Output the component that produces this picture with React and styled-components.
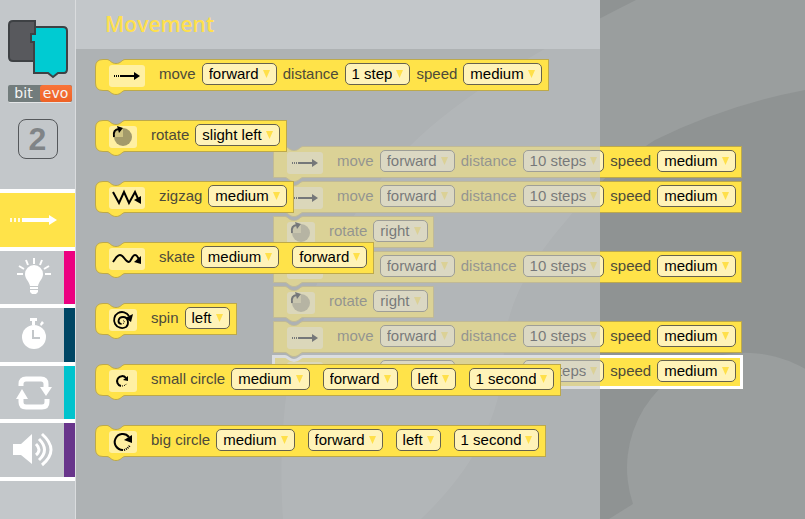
import React from "react";
import styled, { createGlobalStyle, css } from "styled-components";

const yellow = "#ffe349";
const edge = "#bda94a";
const steel = "#c3c7ca";

const GlobalStyle = createGlobalStyle`
  * { box-sizing: border-box; }
  body { margin: 0; font-family: "Liberation Sans", Arial, sans-serif; font-size: 15px; }
`;

const Page = styled.div`
  display: flex;
  min-height: 100vh;
  background: #8f9393;
`;

const Sidebar = styled.aside`
  width: 76px;
  flex: none;
  background: ${steel};
  border-right: 1px solid #dadcde;
`;

const Brand = styled.div`
  display: flex;
  flex-direction: column;
  align-items: center;
  height: 189px;
  padding-top: 18px;
`;

const Robots = styled.div`
  display: flex;
  width: 64px;
  margin: 6px 0 0 4px;
  border-radius: 2px;
  background: #727c7c;
  border-bottom: 1px solid #e4e6e7;
`;

const RobotButton = styled.button`
  flex: 1;
  height: 17px;
  padding: 0;
  border: 0;
  border-radius: 3px;
  font: 14px/15px "DejaVu Sans", sans-serif;
  color: #f4f4f4;
  background: ${(p) => (p.$active ? "linear-gradient(#f8743a, #ee6226)" : "transparent")};
`;

const LevelButton = styled.button`
  width: 40px;
  height: 40px;
  margin-top: 16px;
  padding: 0;
  border: 1px solid #55585b;
  border-radius: 8px;
  background: transparent;
  color: #808487;
  font: bold 32px/38px "Liberation Sans", Arial, sans-serif;
`;

const Categories = styled.nav`
  display: flex;
  flex-direction: column;
  gap: 4px;
  height: 292px;
  padding: 4px 0;
  background: #fff;
`;

const Category = styled.button`
  flex: 1;
  display: flex;
  align-items: center;
  padding: 0;
  border: 0;
  border-right: 11px solid ${(p) => p.$color};
  background: ${(p) => (p.$active ? yellow : steel)};

  svg { display: block; }
`;

const Stage = styled.div`
  position: relative;
  flex: 1;
  min-width: 0;
  display: grid;
  overflow: hidden;
`;

const Backdrop = styled.svg`
  position: absolute;
  top: 0;
  left: 0;
`;

const Workspace = styled.main`
  grid-area: 1 / 1;
  position: relative;
  display: flex;
  flex-direction: column;
  align-items: flex-start;
  gap: 3px;
  padding: 146px 0 0 197px;
`;

const Flyout = styled.section`
  grid-area: 1 / 1;
  position: relative;
  width: 72%;
  max-width: 524px;
  background: rgba(195, 199, 202, 0.6);
`;

const FlyoutHeader = styled.header`
  height: 49px;
  padding-left: 29px;
  background: ${steel};
`;

const Title = styled.h1`
  margin: 0;
  font: 600 21px/48px "Open Sans", "Noto Sans", sans-serif;
  color: #ffe04d;
`;

const BlockList = styled.div`
  display: flex;
  flex-direction: column;
  align-items: flex-start;
  gap: 29px;
  padding: 10px 0 0 19px;
`;

const BlockBox = styled.div`
  position: relative;
  display: flex;
  gap: 6px;
  height: 32px;
  padding: 4px ${(p) => (p.$square ? 6 : 7)}px 4px 14px;
  white-space: nowrap;
`;

const Shape = styled.div`
  position: absolute;
  inset: 0;
  display: flex;

  svg { flex: none; overflow: visible; }
`;

const ShapeBody = styled.div`
  flex: 1;
  background: ${yellow};
  border: 1px solid ${edge};
  border-left: 0;
  ${(p) => p.$selected && css`
    border: 3px solid #fff;
    border-left: 0;
    margin: -1px -1px -1px 0;
  `}
`;

const IconPad = styled.span`
  position: relative;
  align-self: flex-end;
  flex: none;
  width: ${(p) => (p.$wide ? 36 : 28)}px;
  height: 22px;
  margin-right: 8px;
  border-radius: 3px;
  background: #fff0a3;

  svg { display: block; }
`;

const Label = styled.span`
  position: relative;
  line-height: 21px;
  color: #4d4a3a;
`;

const Field = styled.label`
  position: relative;
  display: grid;
  align-self: flex-start;

  & + & { margin-left: 7px; }

  svg {
    grid-area: 1 / 1;
    place-self: center end;
    margin-right: 7px;
    pointer-events: none;
  }
`;

const Select = styled.select`
  grid-area: 1 / 1;
  appearance: none;
  field-sizing: content;
  height: 22px;
  padding: 0 17px 1px 6px;
  border: 1px solid #66624d;
  border-radius: 5px;
  background: #fff3b8;
  color: #000;
  font: 15px/19px "Liberation Sans", Arial, sans-serif;
`;

const ink = { fill: "none", stroke: "#000", strokeWidth: 2 };

const icons = {
  move: {
    wide: true,
    art: (
      <>
        <path d="M5 11h1M7 11h1M9 11h1" {...ink} />
        <path d="M11 11h15" {...ink} />
        <path d="M25 7l6 4-6 4z" />
      </>
    ),
  },
  rotate: {
    art: (
      <>
        <circle cx="14" cy="11" r="9" fill="#a39a6a" />
        <path d="M14 11V2A9 9 0 0 0 5 11z" fill="#d0c484" />
        <path d="M5 11C4 6 6 3 10 3" {...ink} />
        <path d="M8 0l6 2-4 5z" />
      </>
    ),
  },
  zigzag: {
    wide: true,
    art: (
      <>
        <path d="M4 5l6 11 5-11 5 11 6-11 4 9" {...ink} />
        <path d="M25 13l7-4v8z" />
      </>
    ),
  },
  skate: {
    wide: true,
    art: (
      <>
        <path d="M4 14C7 10 8 7 11 7c4 0 5 7 9 7 2 0 3-7 6-7 2 0 3 2 4 5" {...ink} />
        <path d="M25 14l7-6v8z" />
      </>
    ),
  },
  spin: {
    art: (
      <>
        <path d="M20 7A8 8 0 1 0 17 18C20 16 20 8 14 8c-5 0-6 6-2 7" {...ink} strokeWidth="1.8" />
        <path d="M16 9l8-4-2 8z" />
        <path d="M12 15c4 0 4-3 2-4" {...ink} strokeWidth="1" strokeDasharray="1 1" />
      </>
    ),
  },
  small: {
    art: (
      <>
        <path d="M17 8A5 5 0 1 0 12 16" {...ink} />
        <path d="M14 10l5-4v5z" />
        <path d="M13 16c2 0 4-1 5-3" {...ink} strokeWidth="1" strokeDasharray="1 1" />
      </>
    ),
  },
  big: {
    art: (
      <>
        <path d="M20 6A8 8 0 1 0 14 19" {...ink} />
        <path d="M15 9l8-5v8z" />
        <path d="M15 19c3-1 5-3 6-5" {...ink} strokeDasharray="1 1" />
      </>
    ),
  },
};

const choices = {
  direction: ["forward", "backward"],
  speed: ["slow", "medium", "fast", "very fast"],
  distance: ["1 step", "2 steps", "5 steps", "10 steps"],
  turn: ["slight left", "left", "slight right", "right"],
  side: ["left", "right"],
  duration: ["1 second", "2 seconds", "3 seconds"],
};

function LeftCap({ square, selected }) {
  const start = square ? "M0.5 31.5V0.5" : "M8 31.5Q0.5 31.5 0.5 24V8Q0.5 0.5 8 0.5";
  const outline = `${start}H12C15 0.5 16 4.5 21 4.5S27 0.5 30 0.5H41`;
  const under = "V31.5H30C27 31.5 26 35.5 21 35.5S15 31.5 12 31.5H";
  return (
    <svg width="40" height="32" aria-hidden="true">
      <path d={`${outline}${under}${square ? "0.5" : "8"}`} fill={yellow} />
      <path
        d={`M40 0.5H30C27 0.5 26 4.5 21 4.5S15 0.5 12 0.5${
          square ? "H0.5V31.5" : "H8Q0.5 0.5 0.5 8V24Q0.5 31.5 8 31.5"
        }H12C15 31.5 16 35.5 21 35.5S27 31.5 30 31.5H40`}
        fill="none"
        stroke={selected ? "#fff" : edge}
        strokeWidth={selected ? 3 : 1}
      />
    </svg>
  );
}

function Dropdown({ kind, value }) {
  return (
    <Field>
      <Select defaultValue={value} aria-label={kind}>
        {choices[kind].map((c) => <option key={c}>{c}</option>)}
      </Select>
      <svg width="7" height="8" aria-hidden="true">
        <path d="M0 0H7L3.5 8z" fill="#ffe04a" />
      </svg>
    </Field>
  );
}

function Block({ icon, parts, square, selected }) {
  const { wide, art } = icons[icon];
  return (
    <BlockBox $square={square}>
      <Shape>
        <LeftCap square={square} selected={selected} />
        <ShapeBody $selected={selected} />
      </Shape>
      <IconPad $wide={wide}>
        <svg width={wide ? 36 : 28} height="22" aria-hidden="true">{art}</svg>
      </IconPad>
      {parts.map((part, i) =>
        typeof part === "string"
          ? <Label key={i}>{part}</Label>
          : <Dropdown key={i} kind={part[0]} value={part[1]} />
      )}
    </BlockBox>
  );
}

const moveParts = (distance) => [
  "move", ["direction", "forward"],
  "distance", ["distance", distance],
  "speed", ["speed", "medium"],
];

const circleParts = (name) => [
  name, ["speed", "medium"], ["direction", "forward"], ["side", "left"], ["duration", "1 second"],
];

const toolbox = [
  { icon: "move", parts: moveParts("1 step") },
  { icon: "rotate", parts: ["rotate", ["turn", "slight left"]] },
  { icon: "zigzag", parts: ["zigzag", ["speed", "medium"]] },
  { icon: "skate", parts: ["skate", ["speed", "medium"], ["direction", "forward"]] },
  { icon: "spin", parts: ["spin", ["side", "left"]] },
  { icon: "small", parts: circleParts("small circle") },
  { icon: "big", parts: circleParts("big circle") },
];

const move = { icon: "move", parts: moveParts("10 steps") };
const turn = { icon: "rotate", parts: ["rotate", ["turn", "right"]] };
const program = [move, move, turn, move, turn, move, { ...move, selected: true }];

const categories = [
  {
    name: "Movement", color: yellow, active: true,
    art: (
      <>
        <path d="M10 24h2v4h-2zM14 24h2v4h-2zM18 24h2v4h-2z" opacity=".85" />
        <path d="M22 24h27v-3l8 5-8 5v-3H22z" />
      </>
    ),
  },
  {
    name: "Light", color: "#ec0080",
    art: (
      <>
        <path d="M34 14a9 9 0 0 0-9 9c0 5 4 7 5 12h8c1-5 5-7 5-12a9 9 0 0 0-9-9zM30 36h8v2h-8zM30 39h8v2l-2 2h-4l-2-2z" />
        <path d="M34 7v6M26 9l2 5M42 9l-2 5M19 15l5 3M49 15l-5 3M17 23h6M45 23h6" stroke="#fff" strokeWidth="2" />
      </>
    ),
  },
  {
    name: "Timing", color: "#004664",
    art: (
      <>
        <path d="M30 9h7v3h-2v4h-3v-4h-2zM40 15l2-3 2 2-3 3z" />
        <circle cx="34" cy="28" r="12" />
        <path d="M33 21v8h7" fill="none" stroke={steel} strokeWidth="2" />
      </>
    ),
  },
  {
    name: "Loops", color: "#00c3cd",
    art: (
      <>
        <path d="M21 19v-2q0-5 5-5h15q5 0 5 5v4M47 32v3q0 5-5 5H26q-5 0-5-5v-4" fill="none" stroke="#fff" strokeWidth="5" />
        <path d="M40 20h12l-6 9zM16 32h12l-6-10z" />
      </>
    ),
  },
  {
    name: "Sound", color: "#68358b",
    art: (
      <>
        <path d="M13 20h8l11-10v30l-11-9h-8z" />
        <path d="M36 20q6 6 0 11M39 15q11 11 0 21M42 10q18 16 0 31" fill="none" stroke="#fff" strokeWidth="3" />
      </>
    ),
  },
];

export default function App() {
  return (
    <>
      <GlobalStyle />
      <Page>
        <Sidebar>
          <Brand>
            <svg width="62" height="61" aria-hidden="true">
              <path d="M6 3H28V43H6Q2 43 2 39V7Q2 3 6 3z" fill="#58595d" stroke="#3e4144" strokeWidth="2" />
              <path d="M28 9H56Q60 9 60 13V51Q60 55 57 55H51L46 59 41 55H27V24H24V16H28z" fill="#00cbd2" stroke="#3e4144" strokeWidth="2" />
            </svg>
            <Robots>
              <RobotButton>bit</RobotButton>
              <RobotButton $active>evo</RobotButton>
            </Robots>
            <LevelButton>2</LevelButton>
          </Brand>
          <Categories>
            {categories.map((c) => (
              <Category key={c.name} $color={c.color} $active={c.active} aria-label={c.name}>
                <svg width="64" height="52" fill="#fff" aria-hidden="true">{c.art}</svg>
              </Category>
            ))}
          </Categories>
        </Sidebar>
        <Stage>
          <Backdrop width="729" height="519" fill="#9a9e9e" aria-hidden="true">
            <path d="M560 0Q400 80 334 146Q225 260 209 405Q203 465 207 519H345Q428 440 428 350Q430 290 489 222Q530 170 579 140Q650 105 729 90V0z" />
            <path d="M557 504A118 115 0 1 1 787 466V519H533z" />
          </Backdrop>
          <Workspace>
            {program.map((b, i) => <Block key={i} square {...b} />)}
          </Workspace>
          <Flyout>
            <FlyoutHeader><Title>Movement</Title></FlyoutHeader>
            <BlockList>
              {toolbox.map((b, i) => <Block key={i} {...b} />)}
            </BlockList>
          </Flyout>
        </Stage>
      </Page>
    </>
  );
}
